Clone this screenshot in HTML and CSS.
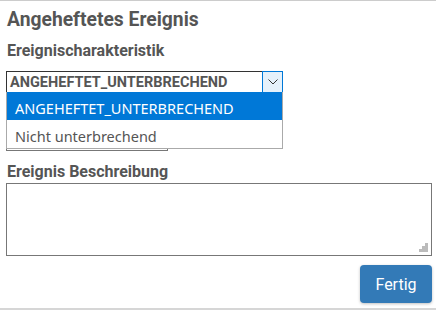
FILE: index.html
```html
<!DOCTYPE html>
<html>
<head>
<meta charset="utf-8">
<link rel="stylesheet" href="styles.css">
</head>
<body>
<div class="panel">
  <h1 class="title">Angeheftetes Ereignis</h1>
  <div class="label">Ereignischarakteristik</div>
  <div class="select-wrap">
    <div class="select">
      <span class="select-text">ANGEHEFTET_UNTERBRECHEND</span>
      <span class="select-btn">
        <svg width="10" height="6" viewBox="0 0 10 6"><path d="M0.5 0.5 L5 5 L9.5 0.5" fill="none" stroke="#333" stroke-width="1"/></svg>
      </span>
    </div>
    <div class="under-box"></div>
    <ul class="dropdown">
      <li class="opt active">ANGEHEFTET_UNTERBRECHEND</li>
      <li class="opt">Nicht unterbrechend</li>
    </ul>
  </div>
  <div class="label label2">Ereignis Beschreibung</div>
  <div class="textarea">
    <svg class="grip" width="9" height="9" viewBox="0 0 9 9">
      <rect x="6" y="0" width="3" height="3" fill="#bbb"/>
      <rect x="3" y="3" width="3" height="3" fill="#bbb"/>
      <rect x="6" y="3" width="3" height="3" fill="#bbb"/>
      <rect x="0" y="6" width="3" height="3" fill="#bbb"/>
      <rect x="3" y="6" width="3" height="3" fill="#bbb"/>
      <rect x="6" y="6" width="3" height="3" fill="#bbb"/>
    </svg>
  </div>
  <div class="actions">
    <button class="btn">Fertig</button>
  </div>
</div>
</body>
</html>
```
FILE: styles.css
```css
* { box-sizing: border-box; }
html, body { margin: 0; padding: 0; background: #fff; }
body { width: 436px; height: 310px; overflow: hidden; font-family: Roboto, "Liberation Sans", sans-serif; color: #555; }
.panel {
  border-top: 1px solid #ccc;
  border-bottom: 2px solid #d6d6d6;
  height: 310px;
  padding: 8px 4px 0 6px;
}
.title {
  margin: 0 0 0 1px;
  height: 22px;
  font-size: 19.3px;
  font-weight: bold;
  line-height: 22px;
  color: #555;
}
.label {
  margin: 10px 0 0 1px;
  height: 20px;
  font-size: 16px;
  font-weight: bold;
  line-height: 20px;
  color: #555;
}
.select-wrap { position: relative; margin-top: 10px; height: 80px; }
.select {
  width: 277px;
  height: 22px;
  border: 1px solid #333;
  display: flex;
  align-items: center;
  background: #fff;
}
.select-text {
  flex: 1;
  padding-left: 3px;
  font-size: 14.5px;
  font-weight: bold;
  color: #555;
}
.select-btn {
  width: 21px;
  height: 22px;
  margin: -1px -1px -1px 0;
  border: 1px solid #0078d7;
  background: #e5f1fb;
  display: flex;
  align-items: center;
  justify-content: center;
}
.under-box {
  position: absolute;
  left: 0; top: 59px;
  width: 162px; height: 21px;
  border: 1px solid #777;
  border-top: none;
}
.dropdown {
  position: absolute;
  left: 0; top: 21px;
  width: 277px;
  margin: 0; padding: 0;
  list-style: none;
  border: 1px solid #aaa;
  border-top: none;
  background: #fff;
  font-family: "Noto Sans", "Open Sans", sans-serif;
  font-size: 14.5px;
}
.opt {
  height: 28px;
  line-height: 28px;
  padding: 2px 0 0 8px;
  color: #555;
}
.opt.active { background: #0078d7; color: #fff; }
.label2 { margin-top: 11px; }
.textarea {
  position: relative;
  margin-top: 1px;
  width: 426px;
  height: 73px;
  border: 1px solid #777;
}
.grip { position: absolute; right: 3px; bottom: 3px; }
.actions { display: flex; justify-content: flex-end; margin-top: 9px; }
.btn {
  width: 72px;
  height: 38px;
  background: #337ab7;
  color: #fff;
  border: none;
  border-radius: 4px;
  font-family: Roboto, "Liberation Sans", sans-serif;
  font-size: 16px;
  box-shadow: 0 1px 3px rgba(0,0,0,0.25);
}
```
